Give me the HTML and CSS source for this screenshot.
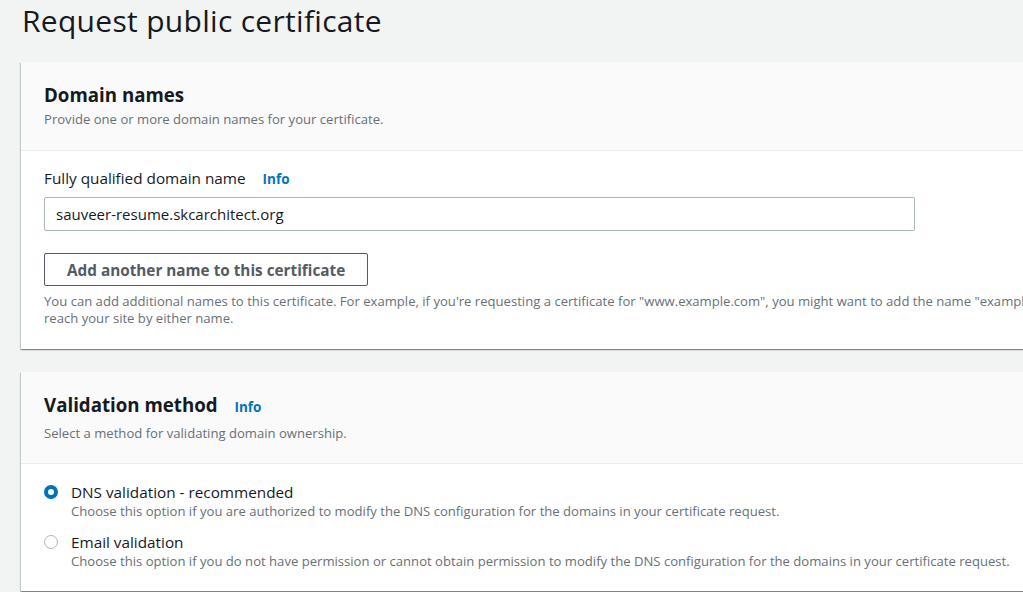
FILE: index.html
```html
<!DOCTYPE html>
<html lang="en">
<head>
<meta charset="utf-8">
<title>Request public certificate</title>
<link rel="stylesheet" href="styles.css">
</head>
<body>
<div class="page">
  <h1 class="title">Request public certificate</h1>

  <section class="card">
    <header class="card-head">
      <h2 class="card-title">Domain names</h2>
      <p class="card-desc">Provide one or more domain names for your certificate.</p>
    </header>
    <div class="card-body">
      <div class="field-label">Fully qualified domain name <a class="info">Info</a></div>
      <div class="input">sauveer-resume.skcarchitect.org</div>
      <button class="btn">Add another name to this certificate</button>
      <p class="hint">You can add additional names to this certificate. For example, if you're requesting a certificate for "www.example.com", you might want to add the name "example.com" so that customers can reach your site by either name.</p>
    </div>
  </section>

  <section class="card">
    <header class="card-head card-head-2">
      <h2 class="card-title">Validation method <a class="info">Info</a></h2>
      <p class="card-desc">Select a method for validating domain ownership.</p>
    </header>
    <div class="card-body radios">
      <div class="radio-row">
        <span class="radio checked"></span>
        <div class="radio-text">
          <div class="radio-label">DNS validation - recommended</div>
          <div class="radio-desc">Choose this option if you are authorized to modify the DNS configuration for the domains in your certificate request.</div>
        </div>
      </div>
      <div class="radio-row">
        <span class="radio"></span>
        <div class="radio-text">
          <div class="radio-label">Email validation</div>
          <div class="radio-desc">Choose this option if you do not have permission or cannot obtain permission to modify the DNS configuration for the domains in your certificate request.</div>
        </div>
      </div>
    </div>
  </section>
</div>
</body>
</html>
```

FILE: styles.css
```css
html, body {
  margin: 0;
  padding: 0;
  background: #f2f3f3;
  overflow: hidden;
}
body {
  font-family: "Open Sans", "Liberation Sans", Arial, sans-serif;
  color: #16191f;
}
.page {
  padding: 0 0 0 21px;
  width: 1300px;
}
.title {
  margin: 0;
  padding: 1px 0 0 1px;
  font-size: 30px;
  font-weight: 400;
  line-height: 40px;
  height: 61px;
  letter-spacing: 0.3px;
}
.card {
  background: #fff;
  box-shadow: 0 1px 1px 0 rgba(0,28,36,.3), 1px 1px 1px 0 rgba(0,28,36,.15), -1px 1px 1px 0 rgba(0,28,36,.15);
  margin-bottom: 23px;
}
.card-head {
  background: #fafafa;
  border-bottom: 1px solid #eaeded;
  padding: 20px 23px 22px;
}
.card-head-2 {
  padding-bottom: 21px;
}
.card-head-2 .card-desc {
  margin-top: 4px;
}
.card-title {
  margin: 0;
  font-size: 18.7px;
  font-weight: 700;
  line-height: 26px;
}
.card-title .info { margin-left: 12px; }
.card-desc {
  margin: 2px 0 0;
  font-size: 13.1px;
  line-height: 18px;
  color: #687078;
}
.card-body {
  padding: 16px 23px 22px;
}
.field-label {
  font-size: 15.3px;
  line-height: 22px;
}
.info {
  color: #0073bb;
  font-weight: 700;
  font-size: 13.5px;
  margin-left: 13px;
}
.input {
  margin-top: 7px;
  width: 871px;
  height: 34px;
  box-sizing: border-box;
  border: 1px solid #aab7b8;
  border-radius: 2px;
  padding: 0 11px;
  font-size: 15px;
  line-height: 32px;
  background: #fff;
}
.btn {
  display: block;
  margin-top: 22px;
  height: 33px;
  box-sizing: border-box;
  padding: 0 22px;
  border: 1px solid #545b64;
  border-radius: 2px;
  background: #fff;
  color: #545b64;
  font-family: inherit;
  font-size: 15.3px;
  font-weight: 700;
}
.hint {
  margin: 7px 0 0;
  width: 1190px;
  font-size: 13.1px;
  line-height: 17px;
  color: #687078;
}
.radios {
  padding-top: 17px;
  display: flex;
  flex-direction: column;
  gap: 12px;
}
.radio-row {
  display: flex;
  gap: 13px;
}
.radio {
  flex: none;
  width: 14px;
  height: 14px;
  box-sizing: border-box;
  margin-top: 4px;
  border: 1px solid #aab7b8;
  border-radius: 50%;
  background: #fff;
}
.radio.checked {
  border: 4px solid #0073bb;
}
.radio-label {
  font-size: 15.3px;
  line-height: 22px;
}
.radio-desc {
  font-size: 13.1px;
  line-height: 16px;
  color: #687078;
}
```
